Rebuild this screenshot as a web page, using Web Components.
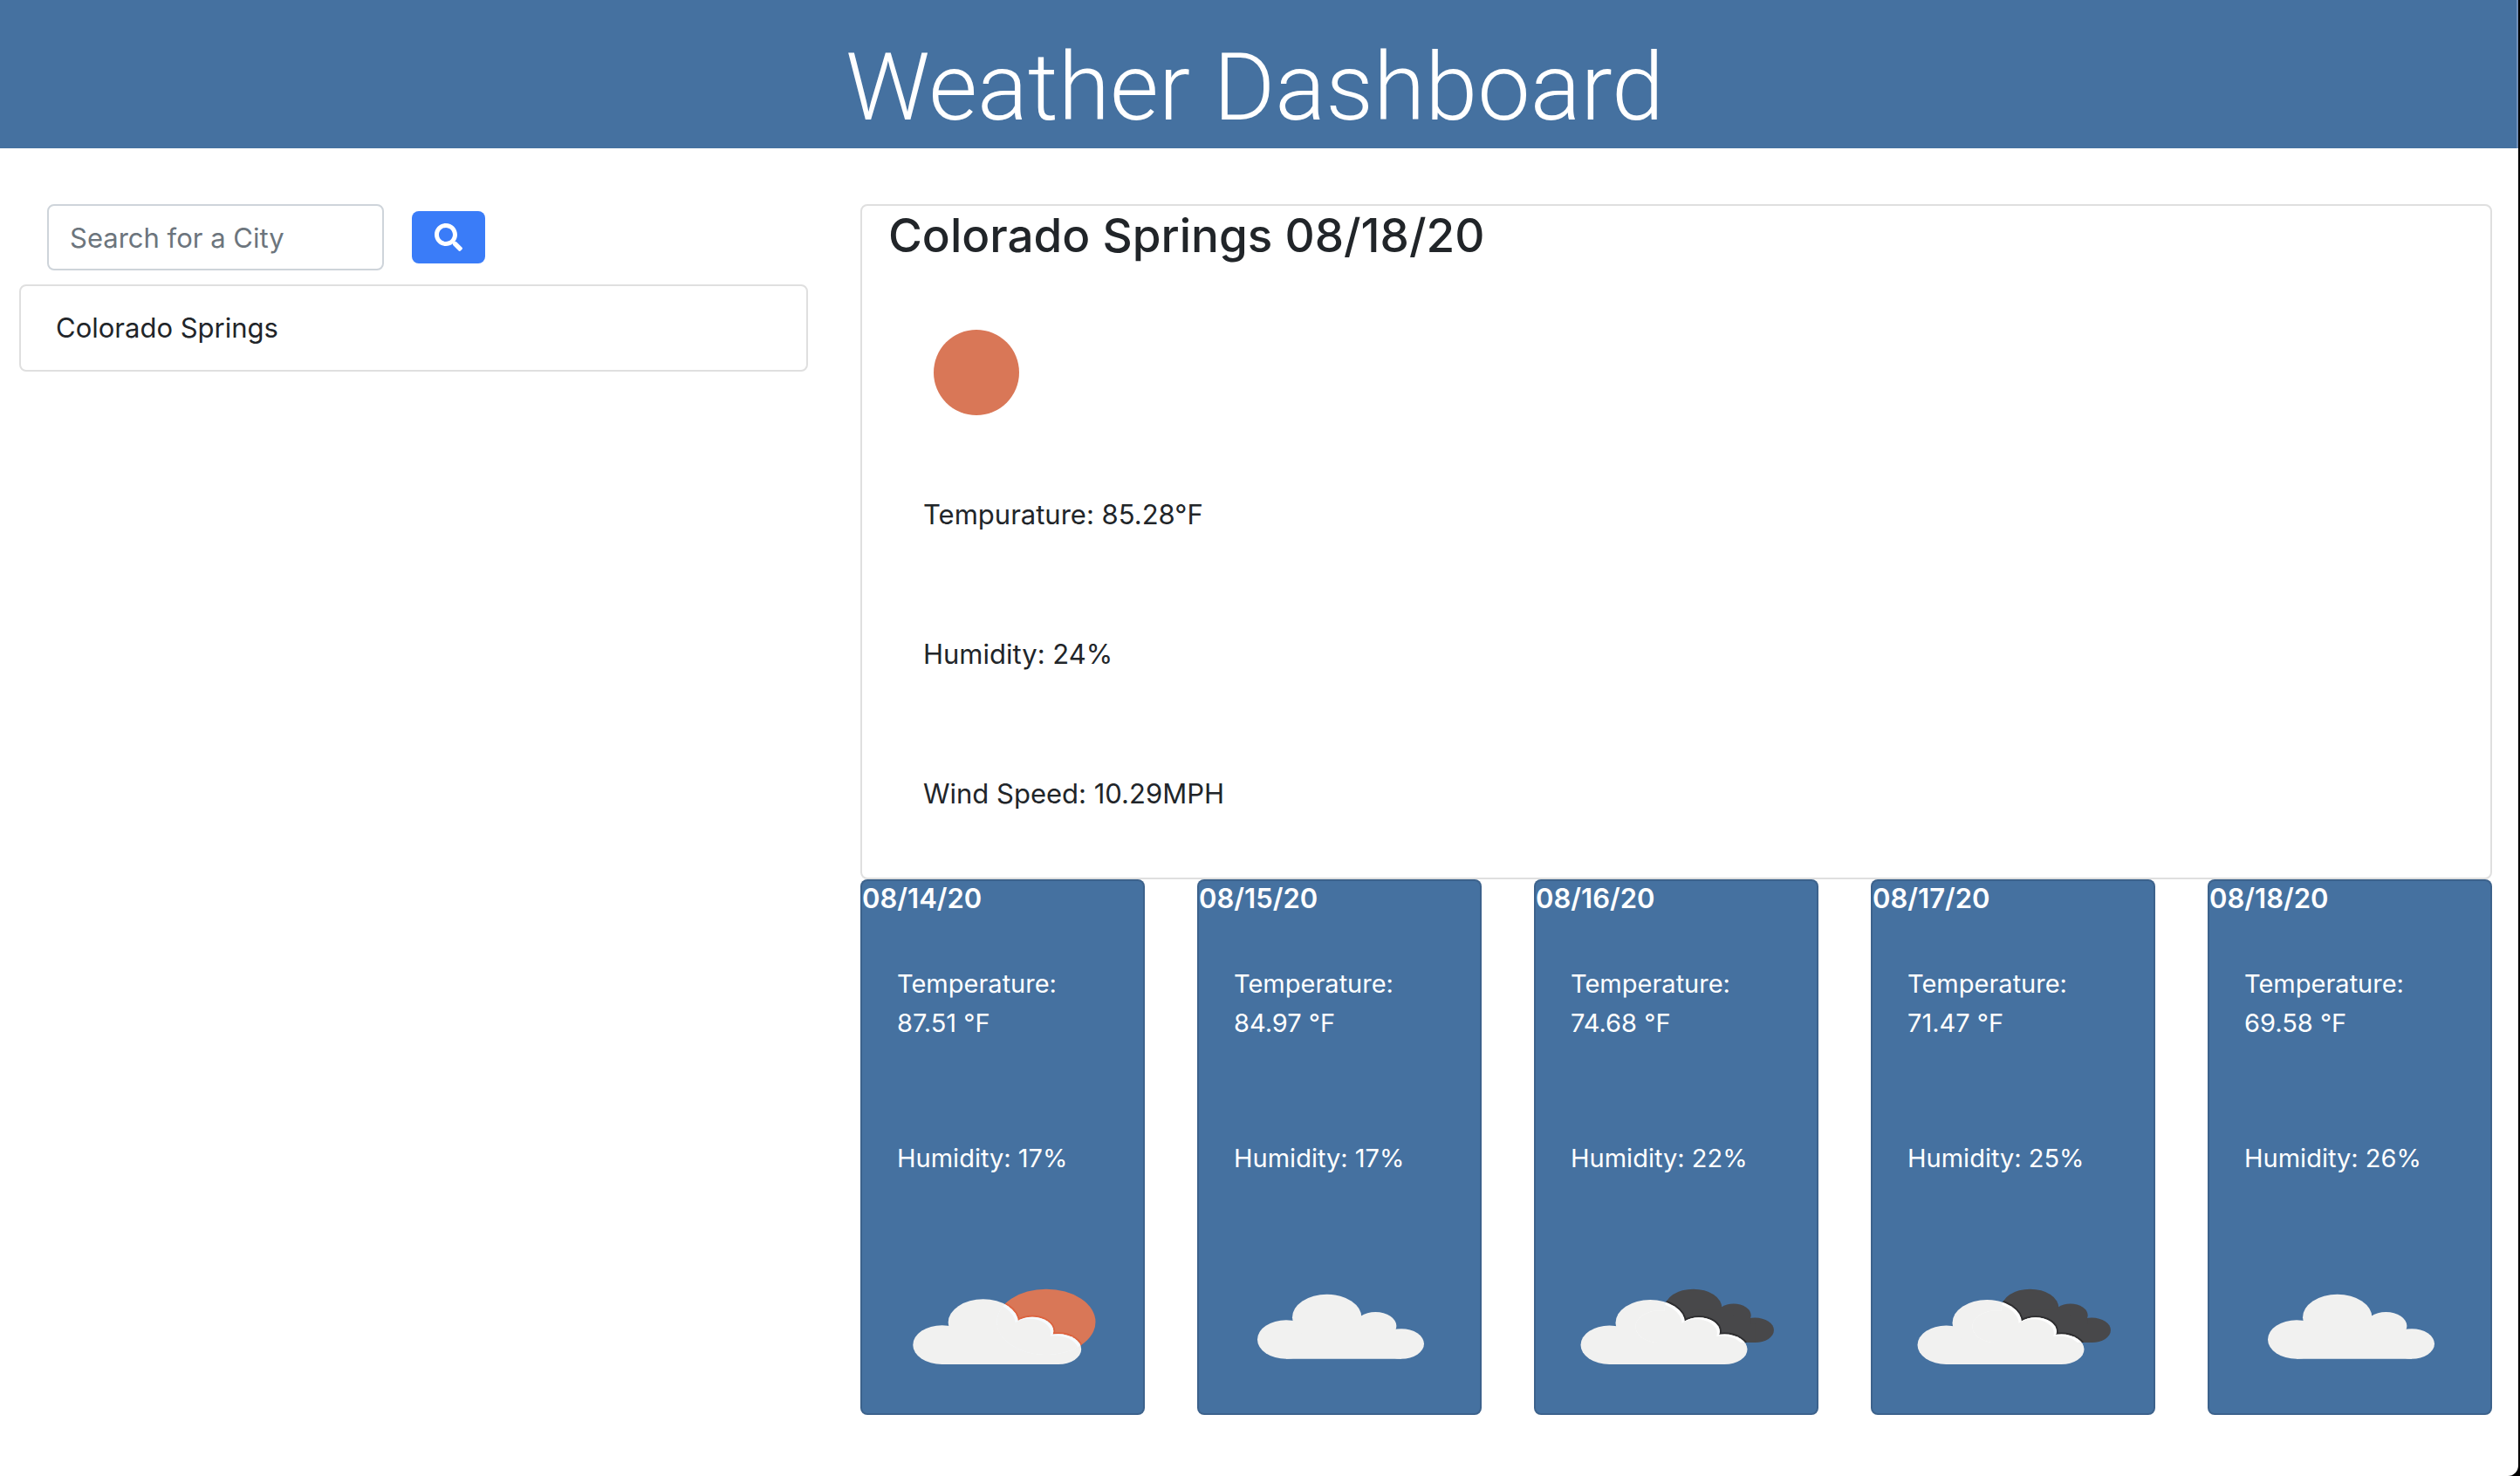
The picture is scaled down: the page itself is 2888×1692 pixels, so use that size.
<!DOCTYPE html>
<html lang="en">
<head>
<meta charset="utf-8">
<title>Weather Dashboard</title>
<style>
  html, body { margin: 0; }
  body {
    background: #000;
    color: #212529;
    font: 400 31px/48px Inter, "Liberation Sans", sans-serif;
    --brand: #4571a0;
    --line: #dfdfdf;
    --radius: 8px;
  }
</style>
</head>
<body>
<weather-app></weather-app>
<script>
const define = (name, html) => {
  const template = document.createElement('template');
  template.innerHTML = `<style>*{box-sizing:border-box}:host{display:block;box-sizing:border-box}</style>${html}`;
  customElements.define(name, class extends HTMLElement {
    constructor() {
      super();
      this.attachShadow({ mode: 'open' }).append(template.content.cloneNode(true));
    }
  });
};

const cloud = `
  <ellipse cx="60" cy="115.5" rx="33" ry="22.2"/>
  <ellipse cx="106.7" cy="90.2" rx="39.7" ry="26.5"/>
  <ellipse cx="162.4" cy="100" rx="24" ry="16"/>
  <ellipse cx="192" cy="120.5" rx="26" ry="17.2"/>
  <path d="M60 115H80V100H106V92H162V104H186V112H192V137.7H60Z"/>`;

const drawings = {
  clear: `<svg viewBox="0 0 200 200" role="img" aria-label="Clear sky"><circle cx="101" cy="101" r="49" fill="#d97757"/></svg>`,
  cloudy: `<svg viewBox="0 0 242 200" role="img" aria-label="Clouds"><g fill="#f1f1f0">${cloud}</g></svg>`,
  partly: `<svg viewBox="0 0 242 200" role="img" aria-label="Partly cloudy">
    <clipPath id="back"><ellipse cx="171" cy="95.4" rx="56.5" ry="37.7"/></clipPath>
    <ellipse cx="171" cy="95.4" rx="56.5" ry="37.7" fill="#d97757"/>
    <g clip-path="url(#back)"><g transform="translate(-9 5) scale(1.01)" fill="#dc6440" stroke="#dc6440" stroke-width="4">${cloud}</g></g>
    <g transform="translate(-9 5) scale(1.01)" fill="#f1f1f0">${cloud}</g>
    <g clip-path="url(#back)"><g transform="translate(-9 5) scale(1.01)" fill="#f6fbff">${cloud}</g>
    <g transform="translate(-12 7) scale(1.01)" fill="#f1f1f0">${cloud}</g></g></svg>`,
  broken: `<svg viewBox="0 0 242 200" role="img" aria-label="Broken clouds">
    <clipPath id="back" transform="translate(52 4.8) scale(.83)">${cloud}</clipPath>
    <g transform="translate(52 4.8) scale(.83)" fill="#48484a">${cloud}</g>
    <g clip-path="url(#back)"><g transform="translate(-15.5 6.3)" fill="#2e2e30" stroke="#2e2e30" stroke-width="4">${cloud}</g></g>
    <g transform="translate(-15.5 6.3)" fill="#f1f1f0">${cloud}</g>
    <g clip-path="url(#back)"><g transform="translate(-15.5 6.3)" fill="#fdfdfd">${cloud}</g>
    <g transform="translate(-18.5 8.3)" fill="#f1f1f0">${cloud}</g></g></svg>`
};

customElements.define('weather-icon', class extends HTMLElement {
  connectedCallback() {
    if (this.shadowRoot) return;
    this.attachShadow({ mode: 'open' }).innerHTML =
      `<style>:host{display:block}svg{display:block;width:100%;height:200px}</style>${drawings[this.getAttribute('type')]}`;
  }
});

define('app-header', `
  <style>
    :host { background: var(--brand); color: #fff; text-align: center; padding: 34px 8px 4px 0; border-right: 2px solid #6f8fb9; }
    h1 { margin: 0; font-family: Roboto, Inter, sans-serif; font-size: 108px; line-height: 132px; font-weight: 300; }
  </style>
  <h1><slot></slot></h1>`);

define('city-search', `
  <style>
    form { display: flex; align-items: center; gap: 32px; padding-left: 32px; }
    input { width: 386px; height: 76px; padding: 0 24px; border: 2px solid #ced4da; border-radius: var(--radius);
      background: #fff; color: inherit; font: inherit; }
    input::placeholder { color: #6c757d; opacity: 1; }
    button { display: grid; place-items: center; width: 84px; height: 60px; padding: 0; border: 0;
      border-radius: var(--radius); background: #3a7cf8; color: #fff; }
    svg { width: 32px; height: 32px; }
  </style>
  <form>
    <input type="text" placeholder="Search for a City" aria-label="Search for a City">
    <button type="button" aria-label="Search">
      <svg viewBox="0 0 512 512" fill="currentColor" aria-hidden="true"><path d="M505 442.7L405.3 343c-4.500-4.500-10.600-7-17-7H372c27.600-35.300 44-79.700 44-128C416 93.100 322.900 0 208 0S0 93.100 0 208s93.100 208 208 208c48.300 0 92.700-16.400 128-44v16.300c0 6.400 2.500 12.500 7 17l99.700 99.700c9.400 9.400 24.600 9.400 33.900 0l28.300-28.300c9.400-9.400 9.400-24.600.1-34zM208 336c-70.700 0-128-57.200-128-128 0-70.700 57.200-128 128-128 70.700 0 128 57.200 128 128 0 70.700-57.200 128-128 128z"/></svg>
    </button>
  </form>`);

define('city-item', `
  <style>
    :host { margin-top: 16px; padding: 24px 40px; border: 2px solid var(--line); border-radius: var(--radius); }
  </style>
  <slot></slot>`);

define('current-weather', `
  <style>
    :host { padding-left: 30px; border: 2px solid var(--line); border-radius: var(--radius); }
    h2 { margin: 0 0 22px; font-size: 53px; line-height: 68px; font-weight: 500; }
    ::slotted(weather-icon) { width: 200px; }
    ::slotted(p) { margin: 0 0 32px; padding: 40px; }
  </style>
  <h2><slot name="title"></slot></h2>
  <slot></slot>`);

define('forecast-card', `
  <style>
    :host { background: var(--brand); color: #fff; border: 2px solid rgba(0,0,0,.125); border-radius: var(--radius);
      font-size: 29px; line-height: 45px; }
    h3 { margin: 0 0 16px; font-size: 31px; line-height: 39px; font-weight: 600; }
    ::slotted(p) { margin: 0 0 30px; padding: 40px; }
    ::slotted(weather-icon) { margin: 0 40px; }
  </style>
  <h3><slot name="date"></slot></h3>
  <slot></slot>`);

const days = [
  ['08/14/20', '87.51', '17', 'partly'],
  ['08/15/20', '84.97', '17', 'cloudy'],
  ['08/16/20', '74.68', '22', 'broken'],
  ['08/17/20', '71.47', '25', 'broken'],
  ['08/18/20', '69.58', '26', 'cloudy']
];

define('weather-app', `
  <style>
    :host { padding-right: 2px; }
    .page { min-height: 100vh; background: #fff; border-bottom-right-radius: 12px; }
    main { display: grid; grid-template-columns: minmax(0, 452fr) minmax(0, 935fr); gap: 60px; padding: 64px 30px 64px 22px; }
    .forecast { display: grid; grid-template-columns: repeat(5, minmax(0, 1fr)); gap: 60px; }
  </style>
  <div class="page">
    <app-header>Weather Dashboard</app-header>
    <main>
      <aside>
        <city-search></city-search>
        <city-item>Colorado Springs</city-item>
      </aside>
      <section>
        <current-weather>
          <span slot="title">Colorado Springs 08/18/20</span>
          <weather-icon type="clear"></weather-icon>
          <p>Tempurature: 85.28°F</p>
          <p>Humidity: 24%</p>
          <p>Wind Speed: 10.29MPH</p>
        </current-weather>
        <div class="forecast">
          ${days.map(([date, temp, hum, icon]) => `
          <forecast-card>
            <span slot="date">${date}</span>
            <p>Temperature: ${temp} °F</p>
            <p>Humidity: ${hum}%</p>
            <weather-icon type="${icon}"></weather-icon>
          </forecast-card>`).join('')}
        </div>
      </section>
    </main>
  </div>`);
</script>
</body>
</html>
